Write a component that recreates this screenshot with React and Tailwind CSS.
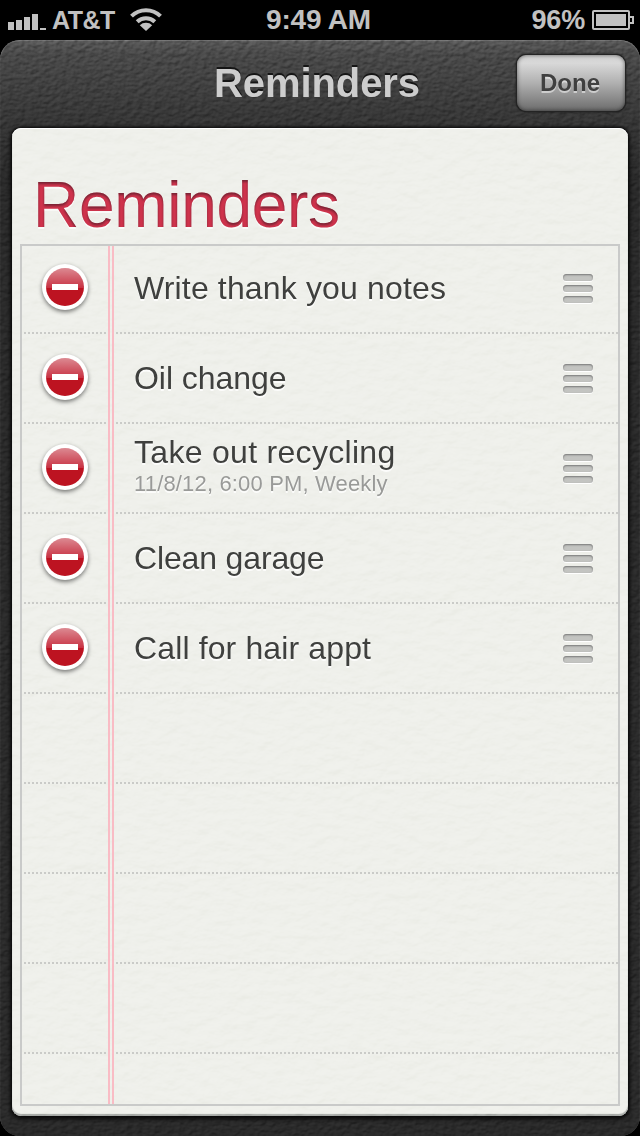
import React, { useState } from "react";

const initialReminders = [
  { id: 1, title: "Write thank you notes", tracking: "tracking-[0.15px]" },
  { id: 2, title: "Oil change", tracking: "tracking-[-0.05px]" },
  {
    id: 3,
    title: "Take out recycling",
    detail: "11/8/12, 6:00 PM, Weekly",
    tracking: "tracking-[0.3px]",
  },
  { id: 4, title: "Clean garage", tracking: "tracking-[-0.15px]" },
  { id: 5, title: "Call for hair appt", tracking: "tracking-[0.13px]" },
];

const EMPTY_ROWS = 4;

const Filters = () => (
  <svg className="absolute w-0 h-0" aria-hidden="true">
    <defs>
      <filter id="leather" x="0" y="0" width="100%" height="100%" colorInterpolationFilters="sRGB">
        <feTurbulence type="fractalNoise" baseFrequency="0.17 0.25" numOctaves="2" seed="4" />
        <feDiffuseLighting surfaceScale="1.3" diffuseConstant="0.707" lightingColor="#fff">
          <feDistantLight azimuth="235" elevation="45" />
        </feDiffuseLighting>
      </filter>
      <filter id="paper" x="0" y="0" width="100%" height="100%" colorInterpolationFilters="sRGB">
        <feTurbulence type="fractalNoise" baseFrequency="0.06 0.1" numOctaves="4" seed="9" />
        <feDiffuseLighting surfaceScale="2.4" diffuseConstant="0.707" lightingColor="#fff">
          <feDistantLight azimuth="250" elevation="45" />
        </feDiffuseLighting>
      </filter>
      {/* pressed-in look for the list title */}
      <filter id="letterpress" x="-5%" y="-10%" width="110%" height="120%" colorInterpolationFilters="sRGB">
        <feOffset in="SourceAlpha" dy="2" result="moved" />
        <feGaussianBlur in="moved" stdDeviation="1.1" result="soft" />
        <feComposite in="SourceAlpha" in2="soft" operator="out" result="edge" />
        <feFlood floodColor="#4a1a26" floodOpacity="0.65" />
        <feComposite in2="edge" operator="in" result="inner" />
        <feOffset in="SourceAlpha" dy="1.5" result="below" />
        <feFlood floodColor="#fff" floodOpacity="0.7" />
        <feComposite in2="below" operator="in" result="light" />
        <feMerge>
          <feMergeNode in="light" />
          <feMergeNode in="SourceGraphic" />
          <feMergeNode in="inner" />
        </feMerge>
      </filter>
    </defs>
  </svg>
);

const Texture = ({ filter, className }) => (
  <svg className={`absolute inset-0 w-full h-full pointer-events-none ${className}`} aria-hidden="true">
    <rect width="100%" height="100%" filter={`url(#${filter})`} />
  </svg>
);

const StatusBar = () => (
  <div className="grid grid-cols-3 h-10 items-center text-[#c1c1c1] font-bold whitespace-nowrap">
    <div className="flex items-center pl-2">
      <svg width="38" height="17" viewBox="0 0 38 17" fill="currentColor" className="mt-[1px]">
        <rect x="0" y="9" width="6" height="8" />
        <rect x="8" y="7" width="6" height="10" />
        <rect x="16" y="4" width="6" height="13" />
        <rect x="24" y="1" width="6" height="16" />
        <rect x="32" y="15" width="6" height="2" />
      </svg>
      <span className="ml-[6px] text-[25px] tracking-[-0.5px]">AT&amp;T</span>
      <svg width="32" height="24" viewBox="0 0 32 24" fill="none" stroke="currentColor" className="ml-[15px] mt-[-1px]">
        <path d="M1.5 8.2 A20.5 20.5 0 0 1 30.5 8.2" strokeWidth="4" />
        <path d="M7.2 13.8 A12.6 12.6 0 0 1 24.8 13.8" strokeWidth="4" />
        <path d="M16 23 L9.8 17.2 A9 9 0 0 1 22.2 17.2 Z" fill="currentColor" stroke="none" />
      </svg>
    </div>
    <div className="mt-[-1px] mr-[3px] text-center text-[28px] tracking-[-0.2px]">9:49 AM</div>
    <div className="flex items-center justify-end pr-[6px] mt-[-1px]">
      <span className="text-[27px] tracking-[-0.2px]">96%</span>
      <svg width="42" height="20" viewBox="0 0 42 20" fill="none" stroke="currentColor" className="ml-[7px] mt-[-1px]">
        <rect x="1" y="1" width="36" height="18" rx="1" strokeWidth="2" />
        <rect x="4" y="4" width="30" height="12" fill="currentColor" stroke="none" />
        <path d="M38 7 H41 V13 H38" strokeWidth="2" />
      </svg>
    </div>
  </div>
);

const DeleteButton = ({ onClick }) => (
  <button
    type="button"
    aria-label="Delete"
    onClick={onClick}
    className="w-[46px] h-[46px] shrink-0 rounded-full bg-white p-1 shadow-[0_2px_4px_rgba(0,0,0,0.5)]"
  >
    <span className="flex w-full h-full items-center justify-center rounded-full bg-[linear-gradient(#dc8a92_0%,#c83243_52%,#bd1321_53%,#bd1321_100%)]">
      <span className="w-[26px] h-[6px] bg-white" />
    </span>
  </button>
);

const DragHandle = () => (
  <div className="flex flex-col gap-1">
    {[0, 1, 2].map((bar) => (
      <span
        key={bar}
        className="w-[30px] h-[7px] rounded-[4px] bg-[#c3c4c1] shadow-[inset_0_1px_2px_#777,0_1px_0_#fff]"
      />
    ))}
  </div>
);

const Row = ({ first, children }) => (
  <div className={`relative flex flex-col h-[90px] ${first ? "mt-[-2px]" : ""}`}>
    <div className="flex flex-1 items-center">{children}</div>
    <div className="ml-[2px] h-[2px] bg-[repeating-linear-gradient(90deg,#cacbc8_0px,#cacbc8_2px,transparent_2px,transparent_4px)]" />
  </div>
);

const App = () => {
  const [reminders, setReminders] = useState(initialReminders);

  const handleDelete = (id) => {
    setReminders(reminders.filter((item) => item.id !== id));
  };

  const emptyCount = initialReminders.length + EMPTY_ROWS - reminders.length;

  return (
    <div className="w-[640px] h-[1136px] overflow-hidden bg-black font-['Liberation_Sans',Arial,sans-serif]">
      <Filters />
      <StatusBar />
      <div className="relative isolate flex flex-col h-[1096px] rounded-[20px] overflow-hidden bg-[linear-gradient(#585858_0px,#494949_14px,#343434_88px,#2a2a2a_140px,#2a2a2a_100%)] shadow-[inset_0_1px_1px_#777]">
        <Texture filter="leather" className="mix-blend-overlay opacity-50" />

        <header className="relative grid grid-cols-[1fr_auto_1fr] h-[88px] items-center pr-[15px]">
          <h1 className="col-start-2 ml-[9px] mt-[-2px] text-[40px] leading-none font-bold text-[#cdcdcd] tracking-[-0.1px] [text-shadow:0_-2px_0_#151515]">
            Reminders
          </h1>
          <button
            type="button"
            className="justify-self-end w-[108px] h-[56px] mt-[-2px] pr-[2px] rounded-[9px] bg-[linear-gradient(#d2d2d2_0%,#d8d8d8_15%,#b0b0b0_50%,#6c6c6c_100%)] text-2xl font-bold text-[#404040] [text-shadow:0_2px_0_rgba(255,255,255,0.5)] shadow-[0_0_0_1px_#242424,0_0_2px_1px_#111,inset_0_0_4px_rgba(0,0,0,0.55)]"
          >
            Done
          </button>
        </header>

        <main className="relative isolate mx-3 h-[988px] rounded-[9px] overflow-hidden bg-[#eff0eb] px-2 shadow-[0_0_3px_1px_#0c0c0c,0_2px_4px_1px_#0c0c0c,inset_0_1px_0_#fff,inset_0_-2px_1px_#a7aaa7]">
          <Texture filter="paper" className="mix-blend-soft-light opacity-45" />
          <h2 className="relative h-[116px] pl-[13px] pt-[45px] text-[64px] leading-[64px] text-[#cf334c] tracking-[-0.3px] [filter:url(#letterpress)]">
            Reminders
          </h2>
          <section className="relative h-[862px] border-2 border-[#c9cac9]">
            {reminders.map((item, index) => (
              <Row key={item.id} first={index === 0}>
                <div className="ml-[20px] mt-[-2px]">
                  <DeleteButton onClick={() => handleDelete(item.id)} />
                </div>
                <div
                  className={`ml-[46px] flex-1 text-[#3f403e] [text-shadow:0_2px_0_rgba(255,255,255,0.8)] ${
                    item.detail ? "pb-[4px]" : ""
                  }`}
                >
                  <p className={`text-[32px] leading-[34px] ${item.tracking}`}>{item.title}</p>
                  {item.detail && (
                    <p className="mt-[2px] text-[22px] leading-[26px] tracking-[0.16px] text-[#999a98]">
                      {item.detail}
                    </p>
                  )}
                </div>
                <div className="mr-[25px]">
                  <DragHandle />
                </div>
              </Row>
            ))}
            {Array.from({ length: emptyCount }).map((_, index) => (
              <Row key={index} first={reminders.length === 0 && index === 0} />
            ))}
            {/* margin lines run over every row */}
            <div className="absolute inset-y-0 left-[86px] w-[6px] border-x-2 border-[#f9bcc5]" />
          </section>
        </main>
      </div>
    </div>
  );
};

export default App;
